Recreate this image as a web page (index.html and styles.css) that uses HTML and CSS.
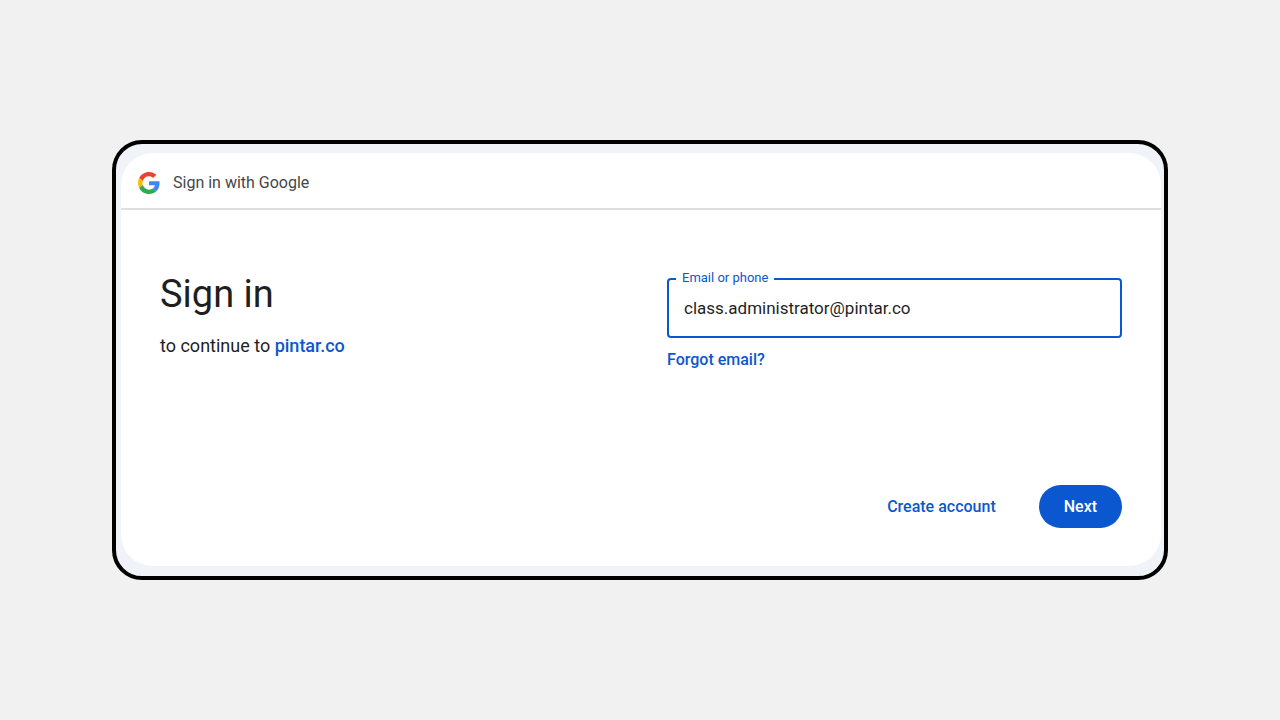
FILE: index.html
```html
<!DOCTYPE html>
<html lang="en">
<head>
    <meta charset="UTF-8">
    <meta name="viewport" content="width=device-width, initial-scale=1.0">
    <title>Sign in</title>
    <link rel="stylesheet" href="styles.css">
</head>
<body>

<div class="frame">
    <div class="card">
        <header class="header">
            <svg class="logo" viewBox="0 0 48 48" aria-hidden="true">
                <path fill="#EA4335" d="M24 9.5c3.54 0 6.71 1.22 9.21 3.6l6.85-6.85C35.9 2.38 30.47 0 24 0 14.62 0 6.51 5.38 2.56 13.22l7.98 6.19C12.43 13.72 17.74 9.5 24 9.5z"/>
                <path fill="#4285F4" d="M46.98 24.55c0-1.57-.15-3.09-.38-4.55H24v9.02h12.94c-.58 2.96-2.26 5.48-4.78 7.18l7.73 6c4.51-4.18 7.09-10.36 7.09-17.65z"/>
                <path fill="#FBBC05" d="M10.53 28.59c-.48-1.45-.76-2.99-.76-4.59s.27-3.14.76-4.59l-7.98-6.19C.92 16.46 0 20.12 0 24c0 3.88.92 7.54 2.56 10.78l7.97-6.19z"/>
                <path fill="#34A853" d="M24 48c6.48 0 11.93-2.13 15.89-5.81l-7.73-6c-2.15 1.45-4.92 2.3-8.16 2.3-6.26 0-11.57-4.22-13.47-9.91l-7.98 6.19C6.51 42.62 14.62 48 24 48z"/>
            </svg>
            <span>Sign in with Google</span>
        </header>

        <main class="content">
            <div class="intro">
                <h1 class="title">Sign in</h1>
                <p class="subtitle">to continue to <a href="#" class="link">pintar.co</a></p>
            </div>

            <form class="form">
                <div class="field">
                    <label for="email" class="label">Email or phone</label>
                    <input type="text" id="email" class="input" value="class.administrator@pintar.co">
                </div>
                <a href="#" class="link forgot">Forgot email?</a>
                <div class="actions">
                    <button type="button" class="button create">Create account</button>
                    <button type="button" class="button next">Next</button>
                </div>
            </form>
        </main>
    </div>
</div>

</body>
</html>
```
FILE: styles.css
```css
* {
    box-sizing: border-box;
}
body {
    font-family: Roboto, Arial, sans-serif;
    display: flex;
    align-items: center;
    min-height: 100vh;
    margin: 0;
    padding: 0 112px;
    background-color: #f1f1f1;
    color: #1f1f1f;
}
.frame {
    flex: 1;
    padding: 9px 3px 10px 5px;
    border: 4px solid #000;
    border-radius: 30px;
    background-color: #f0f4f9;
}
.card {
    border-radius: 32px;
    background-color: #fff;
}
.header {
    display: flex;
    align-items: center;
    gap: 13px;
    height: 57px;
    padding: 4px 17px 0;
    border-bottom: 2px solid #dfdfdf;
    color: #444746;
    font-size: 16px;
}
.logo {
    width: 22px;
    height: 22px;
}
.content {
    display: grid;
    grid-template-columns: 1fr 1fr;
    gap: 52px;
    padding: 60px 39px 38px;
}
.title {
    margin: 0;
    font-size: 38px;
    font-weight: 400;
    line-height: 48px;
}
.subtitle {
    margin: 16px 0 0;
    font-size: 18px;
    line-height: 24px;
}
.link {
    color: #0b57d0;
    font-weight: 500;
    text-decoration: none;
}
.form {
    display: flex;
    flex-direction: column;
    align-items: flex-start;
    padding-top: 8px;
}
.field {
    position: relative;
    width: 100%;
}
.label {
    position: absolute;
    top: -8px;
    left: 9px;
    padding: 0 6px;
    background-color: #fff;
    color: #0b57d0;
    font-size: 13px;
    line-height: 16px;
}
.input {
    display: block;
    width: 100%;
    height: 60px;
    padding: 0 15px;
    border: 2px solid #0b57d0;
    border-radius: 4px;
    outline: none;
    background-color: #fff;
    color: #1f1f1f;
    font-family: inherit;
    font-size: 17px;
}
.forgot {
    margin-top: 12px;
    font-size: 16px;
    line-height: 20px;
}
.actions {
    display: flex;
    align-self: flex-end;
    gap: 18px;
    margin-top: 115px;
}
.button {
    height: 43px;
    padding: 0 25px;
    border: none;
    border-radius: 22px;
    font-family: inherit;
    font-size: 16px;
    font-weight: 500;
    cursor: pointer;
}
.button.create {
    background-color: transparent;
    color: #0b57d0;
}
.button.next {
    background-color: #0b57d0;
    color: white;
}
```
